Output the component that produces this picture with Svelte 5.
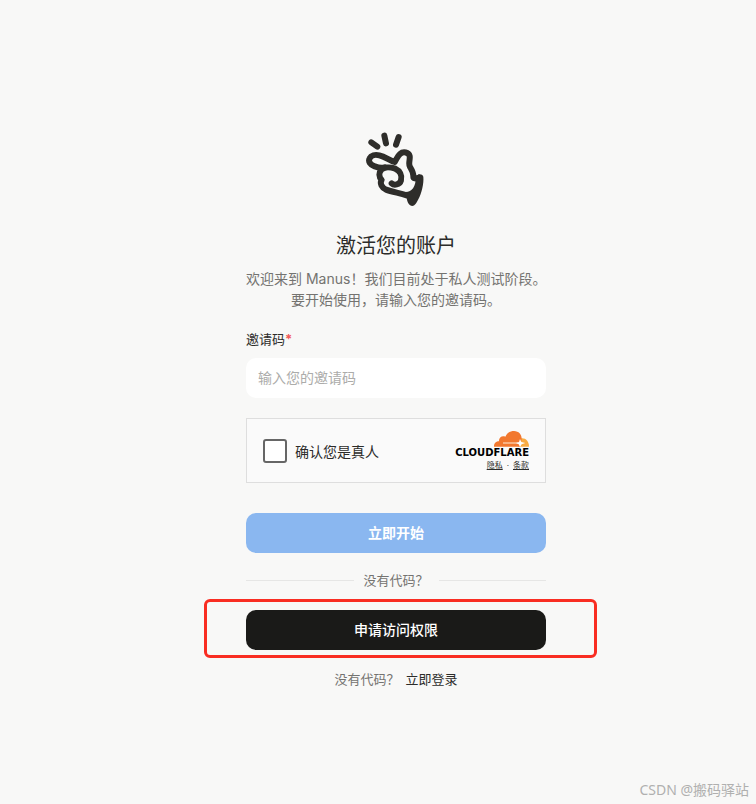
<script lang="ts">
  let code = $state("");
  let human = $state(false);
</script>

<main class="page">
  <form class="panel" onsubmit={(e) => e.preventDefault()}>
    <svg class="logo" viewBox="48 36 180 225" width="60" height="75" fill="none" aria-hidden="true">
      <g stroke="#2e2d2a" stroke-width="18" stroke-linecap="round" stroke-linejoin="round">
        <path d="M64 67 82 80M103 47l5 23M146 51l-8 23" />
        <path d="M104 142C92 146 82 142 74 139 60 134 54 124 59 115 63 106 75 103 88 106 106 110 116 120 134 126 140 117 143 108 150 102 160 93 176 97 179 108 181 119 174 131 180 141 186 151 191 158 190 170 190 175 197 177 206 173" />
        <path d="M125 190C132 197 149 195 153 181 157 166 149 152 136 146 122 141 103 140 94 149 86 158 86 170 95 180 88 190 96 203 108 209 126 216 149 219 170 226" />
      </g>
      <path
        fill="#2e2d2a"
        d="M202 167C204 161 217 161 220 170 222 190 215 219 205 238 200 249 194 258 187 258 178 258 171 248 170 232L160 217C180 217 194 209 197 181Z"
      />
    </svg>

    <h1>激活您的账户</h1>
    <p class="intro">欢迎来到 Manus！我们目前处于私人测试阶段。<br />要开始使用，请输入您的邀请码。</p>

    <label class="field-label" for="code">邀请码<span class="required">*</span></label>
    <input id="code" class="field" type="text" placeholder="输入您的邀请码" bind:value={code} />

    <div class="captcha">
      <label class="verify">
        <input type="checkbox" bind:checked={human} />
        确认您是真人
      </label>
      <div class="brand">
        <svg class="cloud" viewBox="0 0 105 48" width="35" height="16" aria-hidden="true">
          <path fill="#f9ab41" d="M78 23C92 18 105 29 105 47H72Z" />
          <path
            fill="#f2782f"
            d="M0 47C0 35 7 31 15 31 14 20 24 12 34 17 40 4 51 0 60 0 75 0 84 12 83 25L77 47Z"
          />
          <path fill="#fbd0ad" d="M27 34H72V38H27Z" />
          <path fill="#fff" d="M78 24 82 33 94 36 83 40 78 48 74 40 66 36 75 33Z" />
        </svg>
        <span class="wordmark">CLOUDFLARE</span>
        <div class="legal"><a href="#privacy">隐私</a><span>·</span><a href="#terms">条款</a></div>
      </div>
    </div>

    <button class="button start" type="submit">立即开始</button>
    <div class="divider"><span>没有代码？</span></div>
    <div class="highlight">
      <button class="button request" type="button">申请访问权限</button>
    </div>
    <p class="login">没有代码？<a href="#login">立即登录</a></p>
  </form>
  <span class="watermark">CSDN @搬码驿站</span>
</main>

<style>
  :global(body) {
    margin: 0;
    background: #f8f8f7;
  }

  .page {
    position: relative;
    box-sizing: border-box;
    min-height: 100vh;
    padding: 132px 0 112px 36px;
    font-family: Inter, "Noto Sans CJK SC", sans-serif;
    color: #2c2c2a;
  }

  .panel {
    display: flex;
    flex-direction: column;
    width: 300px;
    max-width: 100%;
    margin: 0 auto;
  }

  .logo {
    align-self: center;
  }

  h1 {
    margin: 25px 0 8px;
    font-size: 20px;
    font-weight: 400;
    line-height: 28px;
    text-align: center;
  }

  .intro {
    margin: 0;
    font-size: 14px;
    line-height: 21px;
    text-align: center;
    white-space: nowrap;
    color: #747370;
  }

  .field-label {
    margin: 19px 0 9px;
    font-size: 13px;
    line-height: 20px;
  }

  .required {
    font-weight: 700;
    color: #f25a5a;
  }

  .field {
    box-sizing: border-box;
    width: 100%;
    height: 40px;
    padding: 0 12px 2px;
    border: 0;
    border-radius: 10px;
    background: #fff;
    font: inherit;
    font-size: 14px;
    color: inherit;
  }

  .field::placeholder {
    color: #acacaa;
  }

  .captcha {
    display: flex;
    align-items: center;
    justify-content: space-between;
    box-sizing: border-box;
    height: 65px;
    margin: 20px 0 30px;
    padding: 0 16px;
    border: 1px solid #dedede;
    background: #fafafa;
  }

  .verify {
    display: flex;
    align-items: center;
    gap: 8px;
    font-size: 14px;
  }

  .verify input {
    appearance: none;
    box-sizing: border-box;
    width: 24px;
    height: 24px;
    margin: 0;
    border: 2px solid #666;
    border-radius: 3px;
    background: #fff;
  }

  .verify input:checked {
    background: #666;
  }

  .brand {
    display: flex;
    flex-direction: column;
    align-items: flex-end;
  }

  .wordmark {
    font-family: "DejaVu Sans", sans-serif;
    font-size: 10px;
    font-weight: 700;
    line-height: 12px;
    color: #000;
  }

  .legal {
    display: flex;
    gap: 4px;
    font-size: 8px;
    line-height: 12px;
  }

  .legal a {
    color: inherit;
    text-underline-offset: 1px;
  }

  .button {
    width: 100%;
    height: 40px;
    padding: 0 0 2px;
    border: 0;
    border-radius: 10px;
    font: inherit;
    font-size: 14px;
    font-weight: 500;
    color: #fff;
    cursor: pointer;
  }

  .start {
    background: #8ab7f0;
    font-weight: 700;
  }

  .request {
    background: #1a1a18;
  }

  .divider {
    display: flex;
    align-items: center;
    gap: 10px;
    margin: 17px 0 20px;
    font-size: 13px;
    line-height: 20px;
    color: #747370;
  }

  .divider::before,
  .divider::after {
    content: "";
    flex: 1;
    border-top: 1px solid #e6e6e5;
  }

  .highlight {
    position: relative;
  }

  .highlight::after {
    content: "";
    position: absolute;
    inset: -11px -51px -8px -42px;
    border: 3px solid #f92d22;
    border-radius: 6px;
    pointer-events: none;
  }

  .login {
    display: flex;
    justify-content: center;
    gap: 6px;
    margin: 19px 0 0;
    font-size: 13px;
    line-height: 20px;
    color: #747370;
  }

  .login a {
    color: #2c2c2a;
    text-decoration: none;
  }

  .watermark {
    position: absolute;
    right: 7px;
    bottom: 4px;
    font-family: "Noto Sans", "Noto Sans CJK SC", sans-serif;
    font-size: 14px;
    font-weight: 400;
    line-height: 20px;
    color: #b0b0af;
  }
</style>
